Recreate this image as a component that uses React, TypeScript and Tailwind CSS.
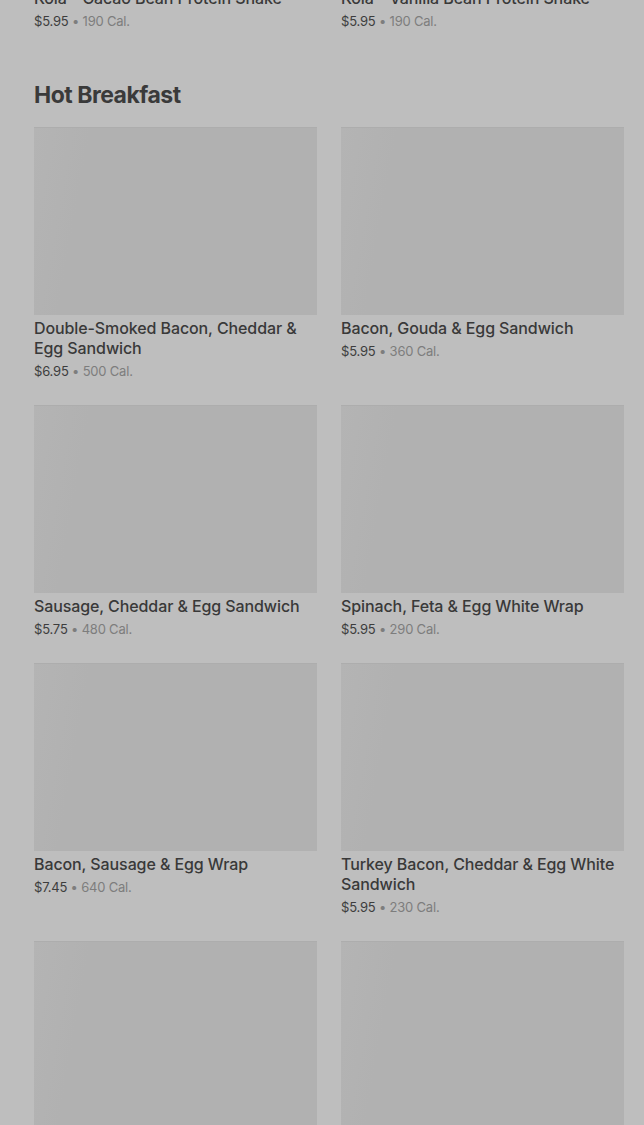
type Item = { name: string; price: string; cal: string }

const prev: Item[] = [
  { name: 'Kola - Cacao Bean Protein Shake', price: '$5.95', cal: '190 Cal.' },
  { name: 'Kola - Vanilla Bean Protein Shake', price: '$5.95', cal: '190 Cal.' },
]

const hot: Item[] = [
  { name: 'Double-Smoked Bacon, Cheddar & Egg Sandwich', price: '$6.95', cal: '500 Cal.' },
  { name: 'Bacon, Gouda & Egg Sandwich', price: '$5.95', cal: '360 Cal.' },
  { name: 'Sausage, Cheddar & Egg Sandwich', price: '$5.75', cal: '480 Cal.' },
  { name: 'Spinach, Feta & Egg White Wrap', price: '$5.95', cal: '290 Cal.' },
  { name: 'Bacon, Sausage & Egg Wrap', price: '$7.45', cal: '640 Cal.' },
  { name: 'Turkey Bacon, Cheddar & Egg White Sandwich', price: '$5.95', cal: '230 Cal.' },
  { name: 'Impossible Breakfast Sandwich', price: '$6.45', cal: '420 Cal.' },
  { name: 'Potato, Cheddar & Chive Bakes', price: '$3.95', cal: '280 Cal.' },
]

const Info = ({ item }: { item: Item }) => (
  <div>
    <div className="mt-[3px] text-[16px] font-medium leading-5 tracking-[-0.1px] text-[#393939]">{item.name}</div>
    <div className="mt-[3px] text-[13px] leading-5 tracking-[-0.2px] text-[#3d3d3d]">
      {item.price}
      <span className="text-[#7d7d7d]"> • {item.cal}</span>
    </div>
  </div>
)

const Card = ({ item }: { item: Item }) => (
  <div>
    <div className="h-[188px] bg-[#b1b1b1] bg-[linear-gradient(100deg,#b4b4b4_0%,#b1b1b1_18%,#b1b1b1_100%)] border-t border-[#adadad]" />
    <Info item={item} />
  </div>
)

export default function App() {
  return (
    <div
      className="h-[1125px] overflow-hidden bg-[#bebebe] pl-[34px] pr-[20px]"
      style={{ fontFamily: 'Inter, "Noto Sans", sans-serif' }}
    >
      <div className="-mt-[15px] grid grid-cols-2 gap-x-6">
        {prev.map((p) => (
          <Info key={p.name} item={p} />
        ))}
      </div>

      <h2 className="mt-[48px] text-[23px] font-bold leading-8 tracking-[-0.5px] text-[#3a3a3a]">
        Hot Breakfast
      </h2>

      <div className="mt-[16px] grid grid-cols-2 gap-x-6 gap-y-6">
        {hot.map((h) => (
          <Card key={h.name} item={h} />
        ))}
      </div>
    </div>
  )
}
